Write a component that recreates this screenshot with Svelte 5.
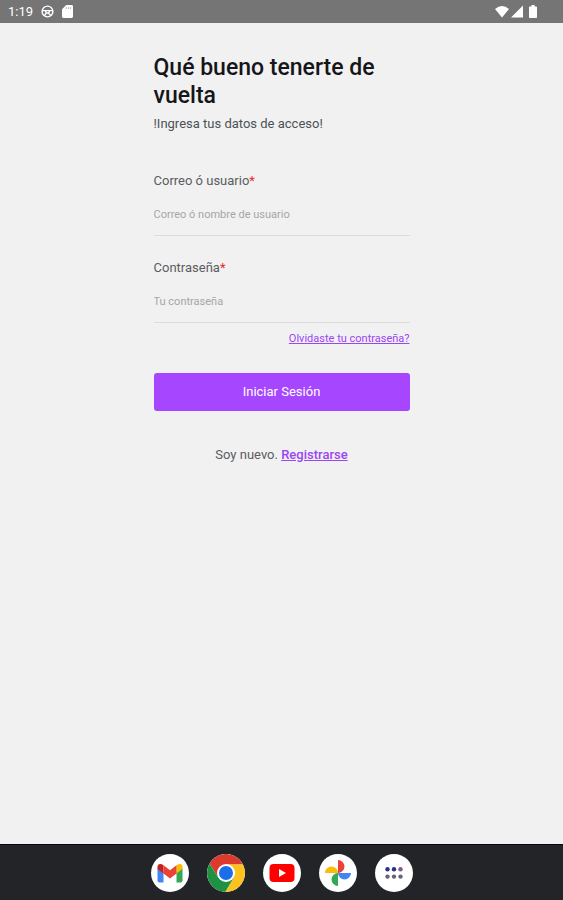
<!--
  Login screen — tablet layout with the system status bar and the app dock.
-->
<script>
  let user = $state('');
  let password = $state('');

  function submit(e) {
    e.preventDefault();
  }
</script>

<div class="screen">
  <header class="status-bar">
    <div class="status-group">
      <span class="clock">1:19</span>
      <svg class="ring" viewBox="0 0 13 13" aria-hidden="true">
        <circle cx="6.5" cy="6.5" r="5.4" />
        <path d="M1.5 5.6H11.5M4.2 5.6L5.4 8H7.6L8.8 5.6M5.4 8L3.6 10.4M7.6 8L9.4 10.4" />
      </svg>
      <svg class="card" viewBox="0 0 11 13" aria-hidden="true">
        <path d="M4.2 0H9.6Q11 0 11 1.4V11.6Q11 13 9.6 13H1.4Q0 13 0 11.6V4.2Z" />
        <path class="pins" d="M4.2 2.2V4M6.4 2.2V4M8.6 2.2V4" />
      </svg>
    </div>
    <div class="status-group right">
      <svg class="wifi" viewBox="0 0 14 12" aria-hidden="true">
        <path d="M7 12L0 3.4Q7 -2.6 14 3.4Z" />
      </svg>
      <svg class="signal" viewBox="0 0 12 12" aria-hidden="true">
        <path d="M0 12L12 0V12Z" />
      </svg>
      <svg class="battery" viewBox="0 0 8 13" aria-hidden="true">
        <path d="M2.4 0H5.6V1.5H7.2Q8 1.5 8 2.3V12.2Q8 13 7.2 13H0.8Q0 13 0 12.2V2.3Q0 1.5 0.8 1.5H2.4Z" />
      </svg>
    </div>
  </header>

  <main>
    <h1>Qué bueno tenerte de vuelta</h1>
    <p class="intro">!Ingresa tus datos de acceso!</p>

    <form onsubmit={submit}>
      <div class="field">
        <label for="user">Correo ó usuario<span class="required">*</span></label>
        <input id="user" type="text" placeholder="Correo ó nombre de usuario" bind:value={user} />
      </div>
      <div class="field">
        <label for="password">Contraseña<span class="required">*</span></label>
        <input id="password" type="password" placeholder="Tu contraseña" bind:value={password} />
      </div>
      <a class="forgot" href="#recuperar">Olvidaste tu contraseña?</a>
      <button class="submit" type="submit">Iniciar Sesión</button>
    </form>

    <p class="register">Soy nuevo. <a href="#registro">Registrarse</a></p>
  </main>

  <nav class="dock">
    <button class="app" aria-label="Gmail">
      <svg viewBox="0 0 38 38">
        <path fill="#4285f4" d="M6.5 14L12.5 18V28.5H8.5Q6.5 28.5 6.5 26.5Z" />
        <path fill="#34a853" d="M31.5 14L25.5 18V28.5H29.5Q31.5 28.5 31.5 26.5Z" />
        <path fill="#c5221f" d="M6.5 13Q6.5 10 9.3 10Q10.8 10 12.5 11.3V19.4L6.5 15Z" />
        <path fill="#fbbc04" d="M31.5 13Q31.5 10 28.7 10Q27.2 10 25.5 11.3V19.4L31.5 15Z" />
        <path fill="#ea4335" d="M12.5 11.3L19 16.3L25.5 11.3V19.4L19 24.4L12.5 19.4Z" />
      </svg>
    </button>
    <button class="app" aria-label="Chrome">
      <svg viewBox="0 0 38 38">
        <path fill="#db3a2c" d="M2.5 9.5L11.2 23.5L19 10.5H36A19 19 0 0 0 2.5 9.5Z" />
        <path fill="#fcc31e" d="M19 10.5H36A19 19 0 0 1 18.2 38L26.8 23.5Z" />
        <path fill="#1e9143" d="M2.5 9.5A19 19 0 0 0 18.2 38L26.8 23.5L11.2 23.5Z" />
        <circle cx="19" cy="19" r="9" fill="#fff" />
        <circle cx="19" cy="19" r="7" fill="#1a6ee8" />
      </svg>
    </button>
    <button class="app" aria-label="YouTube">
      <svg viewBox="0 0 38 38">
        <rect x="6.5" y="10" width="25" height="18" rx="4" fill="#f00" />
        <path fill="#fff" d="M16 15L23 19L16 23Z" />
      </svg>
    </button>
    <button class="app" aria-label="Fotos">
      <svg viewBox="0 0 38 38">
        <path fill="#ea4335" d="M19 6A6.5 6.5 0 0 1 19 19Z" />
        <path fill="#4285f4" d="M32 19A6.5 6.5 0 0 1 19 19Z" />
        <path fill="#34a853" d="M19 32A6.5 6.5 0 0 1 19 19Z" />
        <path fill="#fbbc04" d="M6 19A6.5 6.5 0 0 1 19 19Z" />
      </svg>
    </button>
    <button class="app" aria-label="Todas las aplicaciones">
      <svg viewBox="0 0 38 38">
        <g fill="#29318a">
          <circle cx="12.5" cy="15.2" r="2.2" />
          <circle cx="19" cy="15.2" r="2.2" />
        </g>
        <circle cx="25.5" cy="15.2" r="2.2" fill="#865a80" />
        <g fill="#66627a">
          <circle cx="12.5" cy="22.6" r="2.2" />
          <circle cx="19" cy="22.6" r="2.2" />
          <circle cx="25.5" cy="22.6" r="2.2" />
        </g>
      </svg>
    </button>
  </nav>
</div>

<style>
  :global(body) {
    background: #f1f1f1;
  }
  .screen {
    display: flex;
    flex-direction: column;
    min-height: 100vh;
    font-family: Roboto, 'Liberation Sans', sans-serif;
    font-size: 13px;
    line-height: 16px;
    color: #5c5c60;
  }
  .status-bar {
    display: flex;
    justify-content: space-between;
    align-items: center;
    height: 23px;
    padding: 0 26px 0 8px;
    background: #757575;
    color: #fff;
  }
  .status-group {
    display: flex;
    align-items: center;
    gap: 8px;
  }
  .status-group.right {
    gap: 2px;
  }
  .status-group svg {
    height: 13px;
    fill: #fff;
  }
  .ring {
    width: 13px;
  }
  .status-group .ring {
    fill: none;
    stroke: #fff;
    stroke-width: 1.4;
  }
  .card {
    width: 11px;
  }
  .pins {
    stroke: #b5b5b5;
    stroke-width: 1;
  }
  .wifi {
    width: 14px;
  }
  .signal {
    width: 12px;
  }
  .battery {
    width: 8px;
    margin-left: 4px;
  }
  main {
    flex: 1;
    box-sizing: border-box;
    width: 100%;
    max-width: 256px;
    margin: 0 auto;
    padding-top: 31px;
  }
  h1 {
    margin: 0;
    font-size: 23px;
    line-height: 28px;
    font-weight: 500;
    color: #15151a;
  }
  .intro {
    margin: 6px 0 41px;
    color: #4c5158;
  }
  form {
    display: flex;
    flex-direction: column;
  }
  .field {
    display: flex;
    flex-direction: column;
    margin-bottom: 24px;
  }
  .required {
    color: #f02424;
  }
  input {
    height: 47px;
    box-sizing: border-box;
    padding: 4px 0 0;
    border: 0;
    border-bottom: 1px solid #dcdcdc;
    background: none;
    font: inherit;
    font-size: 11px;
    color: #5c5c60;
    outline: none;
  }
  input::placeholder {
    color: #a6a6a6;
    opacity: 1;
  }
  a {
    color: #9b45f5;
  }
  .forgot {
    align-self: flex-end;
    margin-top: -16px;
    font-size: 11px;
  }
  .submit {
    height: 38px;
    margin-top: 26px;
    border: 0;
    border-radius: 3px;
    background: #a646ff;
    color: #fff;
    font: inherit;
  }
  .register {
    margin: 36px 0 0;
    text-align: center;
  }
  .register a {
    font-weight: 500;
  }
  .dock {
    display: flex;
    justify-content: center;
    align-items: center;
    gap: 18px;
    height: 56px;
    box-sizing: border-box;
    border-top: 1px solid #08080a;
    background: #232428;
  }
  .app {
    width: 38px;
    height: 38px;
    padding: 0;
    border: 0;
    border-radius: 50%;
    background: #fff;
    overflow: hidden;
  }
  .app svg {
    display: block;
    width: 100%;
  }
</style>
